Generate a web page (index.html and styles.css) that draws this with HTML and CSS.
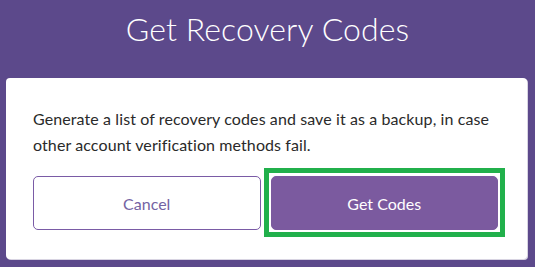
FILE: index.html
```html
<!DOCTYPE html>
<html lang="en">
<head>
<meta charset="utf-8">
<link rel="stylesheet" href="styles.css">
</head>
<body>
<header class="header">
  <h1 class="title">Get Recovery Codes</h1>
</header>
<main class="card">
  <p class="message">Generate a list of recovery codes and save it as a backup, in case other account verification methods fail.</p>
  <div class="actions">
    <button class="btn btn-secondary" type="button">Cancel</button>
    <button class="btn btn-primary" type="button">Get Codes</button>
  </div>
</main>
</body>
</html>
```

FILE: styles.css
```css
html, body {
  margin: 0;
  padding: 0;
}
body {
  background: #5c498b;
  width: 535px;
  height: 267px;
  overflow: hidden;
  font-family: Lato, "Noto Sans", sans-serif;
}
.header {
  height: 78px;
  display: flex;
  justify-content: center;
}
.title {
  margin: 0;
  padding-top: 9px;
  font-size: 32px;
  line-height: 40px;
  font-weight: 300;
  color: #ffffff;
  letter-spacing: 0.1px;
}
.card {
  margin: 0 8px 0 6px;
  background: #ffffff;
  border-radius: 4px;
  box-shadow: 1px 1px 0 #d8d4e2;
  padding: 28px 29px 28px 27px;
  height: 125px;
}
.message {
  margin: 0 0 18px;
  font-size: 16px;
  line-height: 26px;
  color: #2a2a2a;
  letter-spacing: 0.1px;
}
.actions {
  display: grid;
  grid-template-columns: 1fr 1fr;
  gap: 10px;
}
.btn {
  height: 54px;
  border-radius: 5px;
  font-family: Lato, "Noto Sans", sans-serif;
  font-size: 16px;
  cursor: pointer;
}
.btn-secondary {
  background: #ffffff;
  border: 1px solid #7a5ba6;
  color: #7463a3;
}
.btn-primary {
  position: relative;
  background: #7b5a9f;
  border: 1px solid #7b5a9f;
  color: #ffffff;
}
.btn-primary::after {
  content: "";
  position: absolute;
  inset: -9px -8px -8px -8px;
  border: 5px solid #21b04b;
  pointer-events: none;
}
```
